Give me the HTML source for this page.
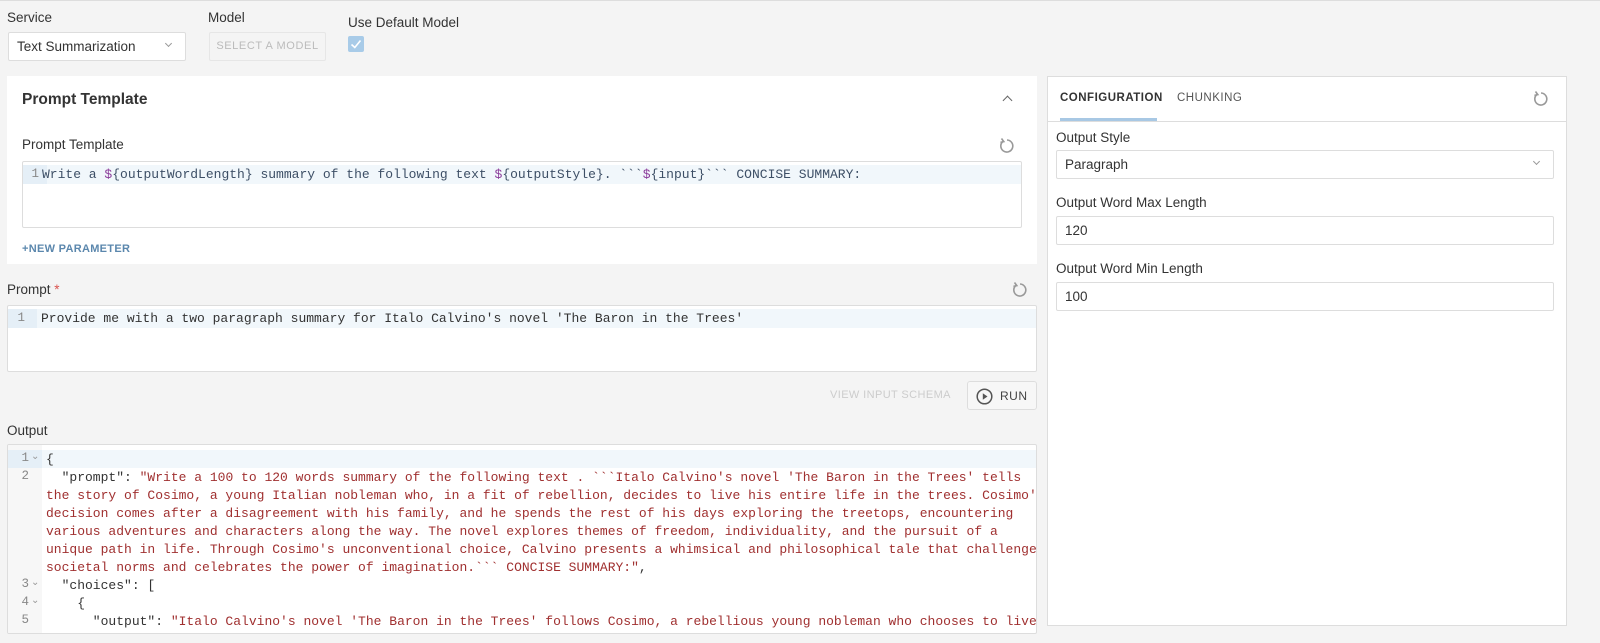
<!DOCTYPE html>
<html><head><meta charset="utf-8"><style>
*{box-sizing:border-box;margin:0;padding:0}
body{width:1600px;height:643px;overflow:hidden;background:#f4f4f4;font-family:"Liberation Sans",sans-serif;color:#333;position:relative;border-top:1px solid #ddd}
.a{position:absolute}
.lbl{font-size:13.5px;color:#333}
.box{background:#fff;border:1px solid #ddd;border-radius:2px}
.mono{font-family:"Liberation Mono",monospace;font-size:13px;white-space:pre}
.ln{position:absolute;left:0;width:28px;text-align:right;color:#888;font-family:"Liberation Mono",monospace;font-size:12.5px}
.chev{width:7px;height:7px;border-right:1.3px solid #777;border-bottom:1.3px solid #777;transform:rotate(45deg)}
.s{color:#a03030}
</style></head><body>
<svg width="0" height="0" style="position:absolute"><defs><g id="rs"><path d="M5.2 4.2 A6 6 0 1 0 9 3" fill="none" stroke="#999" stroke-width="1.6"/><path d="M3.5 1.5 L5.8 4.6 L2.4 5.4" fill="none" stroke="#999" stroke-width="1.6"/></g></defs></svg>

<div class="a lbl" style="left:7px;top:9px">Service</div>
<div class="a box" style="left:8px;top:31px;width:178px;height:29px"><span class="a lbl" style="left:8px;top:6px">Text Summarization</span><div class="a chev" style="left:157px;top:8px;width:5px;height:5px;border-color:#999"></div></div>
<div class="a lbl" style="left:208px;top:9px">Model</div>
<div class="a" style="left:209px;top:31px;width:117px;height:29px;border:1px solid #e6e6e6;border-radius:2px;font-size:11px;color:#bbb;letter-spacing:.6px;text-align:center;line-height:27px">SELECT A MODEL</div>
<div class="a lbl" style="left:348px;top:14px">Use Default Model</div>
<div class="a" style="left:348px;top:35px;width:16px;height:16px;background:#a8cbe8;border-radius:2px"><svg width="16" height="16"><path d="M3.5 8.5 L6.8 11.5 L12.5 4.5" fill="none" stroke="#fff" stroke-width="1.6"/></svg></div>

<div class="a" style="left:7px;top:75px;width:1030px;height:188px;background:#fff">
 <div class="a" style="left:15px;top:15px;font-size:15.5px;font-weight:bold;color:#333">Prompt Template</div>
 <div class="a chev" style="left:997px;top:21px;transform:rotate(225deg);border-color:#666"></div>
 <div class="a lbl" style="left:15px;top:61px">Prompt Template</div>
 <svg class="a" style="left:991px;top:61px" width="18" height="18"><use href="#rs"/></svg>
 <div class="a box" style="left:15px;top:85px;width:1000px;height:67px">
  <div class="a" style="left:0;top:3px;width:998px;height:19px;background:#f1f7fb"></div>
  <div class="a" style="left:0;top:3px;width:24px;height:19px;background:#e5eff7"></div>
  <div class="ln" style="top:5px;width:16px">1</div>
  <div class="a mono" style="left:19px;top:5px;color:#3d4f66">Write a <span style="color:#8a3b9a">$</span>{outputWordLength} summary of the following text <span style="color:#8a3b9a">$</span>{outputStyle}. &#96;&#96;&#96;<span style="color:#8a3b9a">$</span>{input}&#96;&#96;&#96; CONCISE SUMMARY:</div>
 </div>
 <div class="a" style="left:15px;top:167px;font-size:11px;font-weight:bold;color:#5b87ad;letter-spacing:.3px">+NEW PARAMETER</div>
</div>

<div class="a lbl" style="left:7px;top:281px">Prompt <span style="color:#d9534f">*</span></div>
<svg class="a" style="left:1011px;top:280px" width="18" height="18"><use href="#rs"/></svg>
<div class="a box" style="left:7px;top:304px;width:1030px;height:67px">
 <div class="a" style="left:0;top:3px;width:1028px;height:19px;background:#f1f7fb"></div>
 <div class="a" style="left:0;top:3px;width:29px;height:19px;background:#e5eff7"></div>
 <div class="ln" style="top:5px;width:17px">1</div>
 <div class="a mono" style="left:33px;top:5px;color:#333">Provide me with a two paragraph summary for Italo Calvino's novel 'The Baron in the Trees'</div>
</div>
<div class="a" style="left:830px;top:388px;font-size:11px;color:#ccc;letter-spacing:.4px">VIEW INPUT SCHEMA</div>
<div class="a" style="left:967px;top:380px;width:70px;height:29px;border:1px solid #ddd;border-radius:3px;background:#f7f7f7">
 <svg class="a" style="left:8px;top:6px" width="17" height="17"><circle cx="8.5" cy="8.5" r="7.3" fill="none" stroke="#555" stroke-width="1.5"/><path d="M6.8 5.3 L11.5 8.5 L6.8 11.7Z" fill="#555"/></svg>
 <span class="a" style="left:32px;top:7px;font-size:12px;color:#444;letter-spacing:.5px">RUN</span>
</div>

<div class="a lbl" style="left:7px;top:422px">Output</div>
<div class="a box" style="left:7px;top:443px;width:1030px;height:190px;overflow:hidden">
 <div class="a" style="left:0;top:5px;width:1028px;height:18px;background:#f1f7fb"></div>
 <div class="a" style="left:0;top:0;width:34px;height:190px;background:#f7f7f7"></div>
 <div class="a" style="left:0;top:5px;width:34px;height:18px;background:#e5eff7"></div>
 <div class="ln" style="top:6px;width:21px">1</div><div class="a" style="left:23px;top:6px;font-size:10px;color:#999">⌄</div>
 <div class="ln" style="top:24px;width:21px">2</div>
 <div class="ln" style="top:132px;width:21px">3</div><div class="a" style="left:23px;top:132px;font-size:10px;color:#999">⌄</div>
 <div class="ln" style="top:150px;width:21px">4</div><div class="a" style="left:23px;top:150px;font-size:10px;color:#999">⌄</div>
 <div class="ln" style="top:168px;width:21px">5</div>
 <div class="a mono" style="left:38px;top:6px;line-height:18px;color:#333">{
  "prompt": <span class="s">"Write a 100 to 120 words summary of the following text . &#96;&#96;&#96;Italo Calvino's novel 'The Baron in the Trees' tells</span>
<span class="s">the story of Cosimo, a young Italian nobleman who, in a fit of rebellion, decides to live his entire life in the trees. Cosimo's</span>
<span class="s">decision comes after a disagreement with his family, and he spends the rest of his days exploring the treetops, encountering</span>
<span class="s">various adventures and characters along the way. The novel explores themes of freedom, individuality, and the pursuit of a</span>
<span class="s">unique path in life. Through Cosimo's unconventional choice, Calvino presents a whimsical and philosophical tale that challenges</span>
<span class="s">societal norms and celebrates the power of imagination.&#96;&#96;&#96; CONCISE SUMMARY:"</span>,
  "choices": [
    {
      "output": <span class="s">"Italo Calvino's novel 'The Baron in the Trees' follows Cosimo, a rebellious young nobleman who chooses to live</span></div>
</div>

<div class="a box" style="left:1047px;top:75px;width:520px;height:550px;border-radius:0">
 <div class="a" style="left:12px;top:15px;font-size:11.5px;font-weight:bold;color:#333;letter-spacing:.5px">CONFIGURATION</div>
 <div class="a" style="left:129px;top:15px;font-size:11.5px;color:#555;letter-spacing:.5px">CHUNKING</div>
 <div class="a" style="left:12px;top:41px;width:97px;height:3px;background:#a8c8e4"></div>
 <div class="a" style="left:0;top:44px;width:518px;height:1px;background:#ddd"></div>
 <svg class="a" style="left:484px;top:13px" width="18" height="18"><use href="#rs"/></svg>
 <div class="a lbl" style="left:8px;top:53px">Output Style</div>
 <div class="a box" style="left:8px;top:73px;width:498px;height:29px"><span class="a lbl" style="left:8px;top:6px">Paragraph</span><div class="a chev" style="left:477px;top:8px;width:5px;height:5px;border-color:#999"></div></div>
 <div class="a lbl" style="left:8px;top:118px">Output Word Max Length</div>
 <div class="a box" style="left:8px;top:139px;width:498px;height:29px"><span class="a lbl" style="left:8px;top:6px">120</span></div>
 <div class="a lbl" style="left:8px;top:184px">Output Word Min Length</div>
 <div class="a box" style="left:8px;top:205px;width:498px;height:29px"><span class="a lbl" style="left:8px;top:6px">100</span></div>
</div>
</body></html>
